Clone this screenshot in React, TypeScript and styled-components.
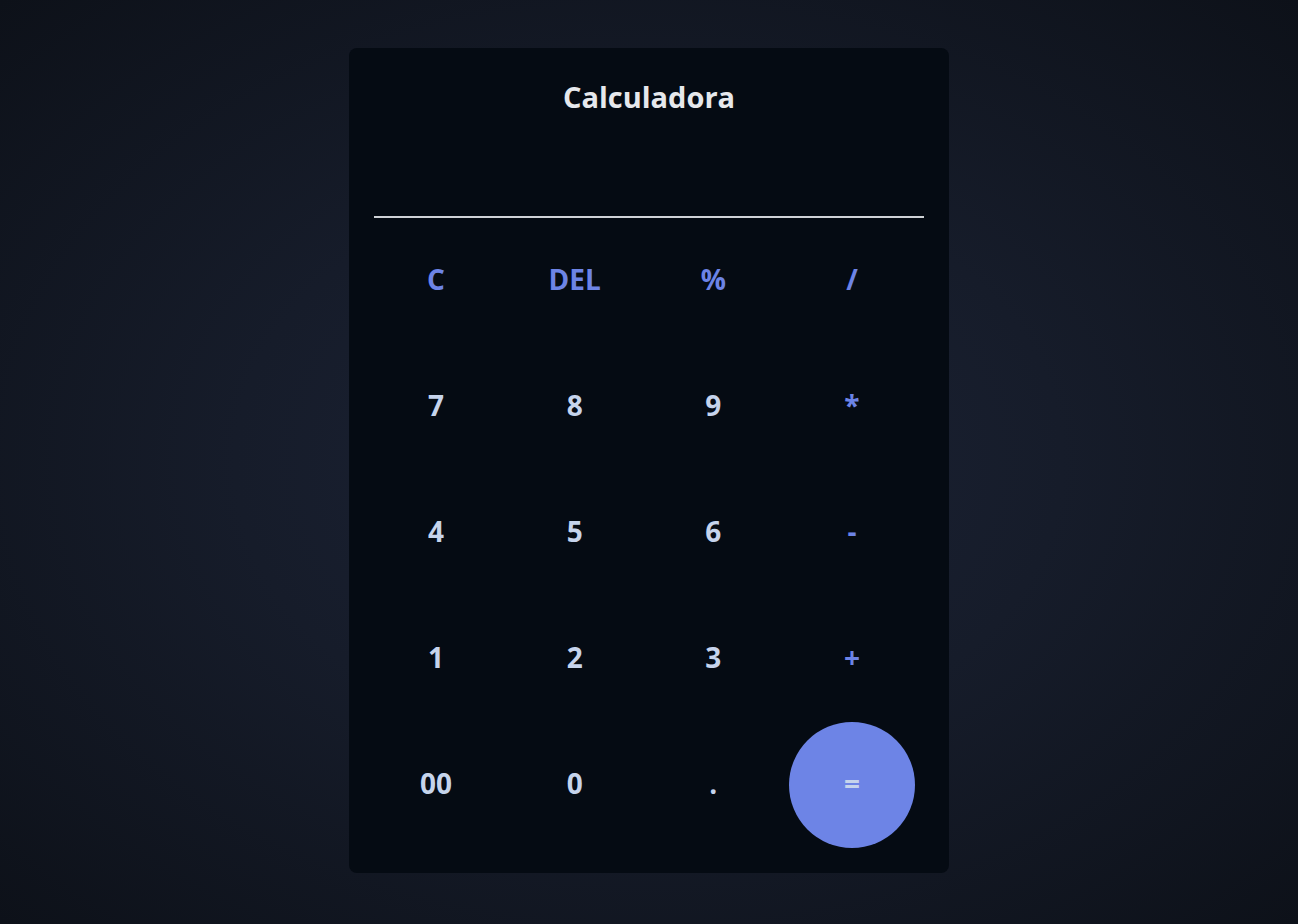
import React from "react";
import styled, { createGlobalStyle } from "styled-components";

const Global = createGlobalStyle`
  html, body { margin: 0; padding: 0; }
  body {
    min-height: 924px;
    background: radial-gradient(ellipse at 50% 50%, #1c2336 0%, #161c2a 45%, #0d1119 100%);
    font-family: "Open Sans", "Noto Sans", sans-serif;
  }
`;

const Page = styled.div`
  min-height: 924px;
  display: flex;
  justify-content: center;
  align-items: flex-start;
  padding-top: 48px;
  box-sizing: border-box;
`;

const Card = styled.div`
  width: 600px;
  height: 825px;
  background: #050b13;
  border-radius: 8px;
  box-sizing: border-box;
  padding: 0 25px 24px 25px;
  display: flex;
  flex-direction: column;
`;

const Title = styled.h1`
  margin: 0;
  padding-top: 30px;
  height: 38px;
  line-height: 38px;
  text-align: center;
  color: #e6e8ec;
  font-size: 29px;
  font-weight: 700;
`;

const Display = styled.div`
  height: 100px;
  border-bottom: 2px solid #cfd2d6;
`;

const Keys = styled.div`
  display: grid;
  grid-template-columns: repeat(4, 126px);
  grid-auto-rows: 126px;
  column-gap: 12.67px;
  margin-left: -1px;
`;

const Key = styled.button<{ $op?: boolean; $eq?: boolean }>`
  border: none;
  margin: 0;
  padding: 0 0 4px 0;
  background: ${(p) => (p.$eq ? "#6d84e6" : "transparent")};
  border-radius: 50%;
  color: ${(p) => (p.$op && !p.$eq ? "#6d84e6" : "#c6d4ec")};
  font-family: "Open Sans", "Noto Sans", sans-serif;
  font-size: 28px;
  font-weight: 700;
  display: flex;
  align-items: center;
  justify-content: center;
  cursor: pointer;
`;

const keys: { l: string; op?: boolean; eq?: boolean }[] = [
  { l: "C", op: true },
  { l: "DEL", op: true },
  { l: "%", op: true },
  { l: "/", op: true },
  { l: "7" },
  { l: "8" },
  { l: "9" },
  { l: "*", op: true },
  { l: "4" },
  { l: "5" },
  { l: "6" },
  { l: "-", op: true },
  { l: "1" },
  { l: "2" },
  { l: "3" },
  { l: "+", op: true },
  { l: "00" },
  { l: "0" },
  { l: "." },
  { l: "=", op: true, eq: true },
];

export default function App() {
  return (
    <>
      <Global />
      <Page>
        <Card>
          <Title>Calculadora</Title>
          <Display />
          <Keys>
            {keys.map((k) => (
              <Key key={k.l} $op={k.op} $eq={k.eq}>
                {k.l}
              </Key>
            ))}
          </Keys>
        </Card>
      </Page>
    </>
  );
}
